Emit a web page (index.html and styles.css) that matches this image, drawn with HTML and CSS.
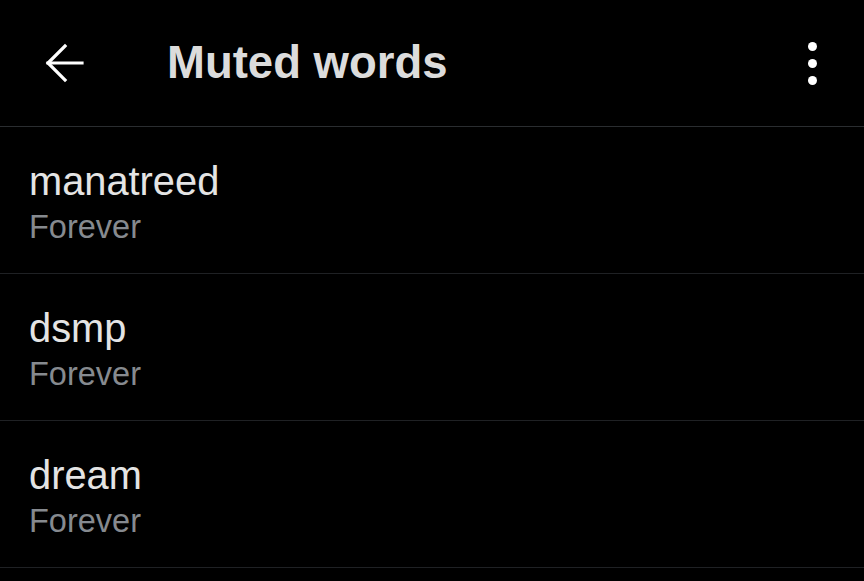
FILE: index.html
```html
<!DOCTYPE html>
<html>
<head>
<meta charset="utf-8">
<link rel="stylesheet" href="styles.css">
</head>
<body>
<div class="app">
  <header class="topbar">
    <div class="back">
      <svg width="40" height="40" viewBox="0 0 40 40" fill="none" stroke="#ffffff" stroke-width="3.2" stroke-linecap="square">
        <path d="M4 20 H38"/>
        <path d="M21 3 L4 20 L21 37"/>
      </svg>
    </div>
    <h1 class="title">Muted words</h1>
    <div class="more">
      <span class="dot"></span>
      <span class="dot"></span>
      <span class="dot"></span>
    </div>
  </header>
  <ul class="list">
    <li class="item">
      <div class="word">manatreed</div>
      <div class="dur">Forever</div>
    </li>
    <li class="item">
      <div class="word">dsmp</div>
      <div class="dur">Forever</div>
    </li>
    <li class="item">
      <div class="word">dream</div>
      <div class="dur">Forever</div>
    </li>
  </ul>
</div>
</body>
</html>
```
FILE: styles.css
```css
html, body {
  margin: 0;
  padding: 0;
  background: #000;
}
body {
  font-family: "Liberation Sans", Arial, sans-serif;
  color: #e7e9ea;
}
.app {
  width: 864px;
  height: 581px;
  overflow: hidden;
  background: #000;
}
.topbar {
  height: 126px;
  display: flex;
  align-items: center;
  border-bottom: 1px solid #2a2d30;
}
.back {
  width: 40px;
  height: 40px;
  margin-left: 44px;
  margin-right: 83px;
  display: flex;
}
.title {
  margin: 0;
  flex: 1;
  font-size: 45.5px;
  font-weight: 700;
  color: #dcdcdc;
}
.more {
  width: 10px;
  display: flex;
  flex-direction: column;
  gap: 8px;
  margin-right: 46px;
}
.dot {
  width: 9px;
  height: 9px;
  border-radius: 50%;
  background: #fff;
}
.list {
  list-style: none;
  margin: 0;
  padding: 0;
}
.item {
  height: 147px;
  box-sizing: border-box;
  border-bottom: 1px solid #1f2124;
  padding-left: 29px;
  padding-top: 5px;
  display: flex;
  flex-direction: column;
  justify-content: center;
}
.word {
  font-size: 39.8px;
  line-height: 46px;
  color: #e4e4e4;
}
.dur {
  margin-top: 2px;
  font-size: 32.5px;
  line-height: 42px;
  color: #868a8f;
}
```
